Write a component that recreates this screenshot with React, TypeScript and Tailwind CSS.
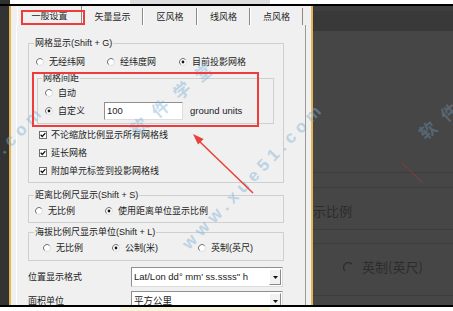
import React from 'react';

// Grid settings dialog (一般设置 tab) over a dimmed screenshot

type RadioProps = { checked?: boolean; label: string };

const Radio = ({ checked, label }: RadioProps) => (
  <div className="flex items-center gap-[5px] h-[12px] whitespace-nowrap">
    <svg width="8" height="8" viewBox="0 0 8 8" className="shrink-0">
      <circle cx="4" cy="4" r="3.5" fill="#ffffff" stroke="#dcdcdc" />
      <path d="M1.5 6.5 A3.5 3.5 0 0 1 6.5 1.5" fill="none" stroke="#7a7a7a" />
      {checked && <circle cx="4" cy="4" r="1.4" fill="#151515" />}
    </svg>
    <span>{label}</span>
  </div>
);

const Check = ({ label }: { label: string }) => (
  <div className="flex items-center gap-[4px] h-[12px] whitespace-nowrap">
    <svg width="8" height="8" viewBox="0 0 8 8" className="shrink-0">
      <rect x="0.5" y="0.5" width="7" height="7" fill="#ffffff" stroke="#6e6e6e" />
      <path d="M1.7 3.8 L3.3 5.5 L6.3 2.1" fill="none" stroke="#111111" strokeWidth="1.3" />
    </svg>
    <span>{label}</span>
  </div>
);

const Tab = ({ label, className }: { label: string; className: string }) => (
  <div className={`flex items-center justify-center border-r border-[#8a8a8a] ${className}`}>
    {label}
  </div>
);

const Select = ({ value }: { value: string }) => (
  <div className="w-[152px] h-[20px] flex bg-white border border-[#8f8f8f] border-b-[#dcdcdc] border-r-[#dcdcdc] shrink-0">
    <div className="flex-1 flex items-center pl-[2px] text-[9.5px] whitespace-nowrap overflow-hidden">{value}</div>
    <div className="w-[12px] my-[1px] mr-[1px] flex items-center justify-center bg-[#f2f2f2] border border-[#ffffff] border-b-[#8a8a8a] border-r-[#8a8a8a]">
      <svg width="5" height="3" viewBox="0 0 5 3">
        <path d="M0 0 H5 L2.5 3 Z" fill="#111111" />
      </svg>
    </div>
  </div>
);

const App = () => {
  return (
    <div className="w-[453px] h-[311px] relative overflow-hidden bg-white flex flex-col font-['Liberation_Sans','Noto_Sans_CJK_SC',sans-serif] text-[9px] leading-[12px] text-[#1c1c1c]">
      {/* top edge of the page behind */}
      <div className="h-[4px] flex shrink-0">
        <div className="w-[10px] bg-[#303030]" />
        <div className="w-[120px] bg-white" />
        <div className="w-[140px] bg-[#dedede]" />
        <div className="flex-1 bg-white" />
      </div>
      <div className="h-[2px] bg-black shrink-0" />

      <div className="flex h-[299px] shrink-0">
        <div className="w-[9px] bg-[#333333]" />
        <div className="w-[2px] bg-[#e3b651]" />

        {/* Dialog */}
        <div className="w-[300px] bg-[#f0f0f0] flex flex-col">
          <div className="h-[19px] flex pl-[6px] shrink-0">
            <Tab label="一般设置" className="w-[65px] border-l border-l-white" />
            <Tab label="矢量显示" className="w-[61px] mt-[2px] border-l border-l-white" />
            <Tab label="区风格" className="w-[54px] mt-[2px] border-l border-l-white" />
            <Tab label="线风格" className="w-[53px] mt-[2px] border-l border-l-white" />
            <Tab label="点风格" className="w-[53px] mt-[2px] border-l border-l-white" />
          </div>

          <div className="ml-[5px] w-[290px] flex-1 overflow-hidden border-l border-l-white border-r border-r-[#9a9a9a] pl-[11px] flex flex-col">
            {/* 网格显示 */}
            <fieldset className="w-[256px] mt-[12px] border border-[#cfcfcf] pb-[5px] shrink-0">
              <legend className="ml-[5px] px-[1px] leading-[12px]">网格显示(Shift + G)</legend>
              <div className="flex mt-[7px] pl-[7px]">
                <div className="w-[71px]"><Radio label="无经纬网" /></div>
                <div className="w-[72px]"><Radio label="经纬度网" /></div>
                <Radio checked label="目前投影网格" />
              </div>

              <fieldset className="ml-[8px] w-[237px] mt-[4px] border border-[#cfcfcf] pb-[3px]">
                <legend className="ml-[4px] px-[1px] leading-[12px]">网格间距</legend>
                <div className="pl-[7px] mt-[3px]"><Radio label="自动" /></div>
                <div className="flex items-center pl-[7px] mt-[3px] h-[18px]">
                  <div className="w-[59px]"><Radio checked label="自定义" /></div>
                  <div className="w-[79px] h-[18px] bg-white border border-[#8f8f8f] border-b-[#dedede] border-r-[#dedede] pl-[2px] flex items-center text-[9.5px]">100</div>
                  <span className="ml-[7px] text-[9.5px]">ground units</span>
                </div>
              </fieldset>

              <div className="pl-[10px] mt-[5px] flex flex-col gap-[6px]">
                <Check label="不论缩放比例显示所有网格线" />
                <Check label="延长网格" />
                <Check label="附加单元标签到投影网格线" />
              </div>
            </fieldset>

            {/* 距离比例尺 */}
            <fieldset className="w-[256px] mt-[6px] border border-[#cfcfcf] pb-[5px] shrink-0">
              <legend className="ml-[5px] px-[1px] leading-[12px]">距离比例尺显示(Shift + S)</legend>
              <div className="flex mt-[4px] pl-[6px]">
                <div className="w-[70px]"><Radio label="无比例" /></div>
                <Radio checked label="使用距离单位显示比例" />
              </div>
            </fieldset>

            {/* 海拔比例尺 */}
            <fieldset className="w-[256px] mt-[3px] border border-[#cfcfcf] pb-[6px] shrink-0">
              <legend className="ml-[5px] px-[1px] leading-[12px]">海拔比例尺显示单位(Shift + L)</legend>
              <div className="flex mt-[4px] pl-[14px]">
                <div className="w-[69px]"><Radio label="无比例" /></div>
                <div className="w-[86px]"><Radio checked label="公制(米)" /></div>
                <Radio label="英制(英尺)" />
              </div>
            </fieldset>

            <div className="flex items-center mt-[6px] shrink-0">
              <div className="w-[103px]">位置显示格式</div>
              <Select value={'Lat/Lon dd° mm\' ss.ssss" h'} />
            </div>
            <div className="flex items-center mt-[4px] shrink-0">
              <div className="w-[103px]">面积单位</div>
              <Select value="平方公里" />
            </div>
          </div>
        </div>

        <div className="w-[2px] bg-[#e3b651]" />

        {/* dimmed background window */}
        <div className="flex-1 flex flex-col bg-[#464646] text-[13px] leading-[16px] text-[#2c2c2c] font-['Noto_Sans_CJK_SC',sans-serif]">
          <div className="h-[5px] bg-[#3e3e3e] shrink-0" />
          <div className="h-[20px] bg-[#393939] shrink-0" />
          <div className="h-[141px] shrink-0" />
          <div className="h-px bg-[#3d3d3d] shrink-0" />
          <div className="h-[14px] shrink-0" />
          <div className="h-px bg-[#3d3d3d] shrink-0" />
          <div className="h-[41px] pt-[15px] shrink-0 whitespace-nowrap">示比例</div>
          <div className="h-px bg-[#3d3d3d] shrink-0" />
          <div className="h-[13px] shrink-0" />
          <div className="h-px bg-[#3d3d3d] shrink-0" />
          <div className="h-[51px] pt-[15px] pl-[30px] flex gap-[8px] shrink-0 whitespace-nowrap">
            <svg width="11" height="11" viewBox="0 0 11 11" className="mt-[3px]">
              <path d="M2 9 A4.5 4.5 0 0 1 9 2" fill="none" stroke="#2e2e2e" strokeWidth="1.2" />
            </svg>
            <span>英制(英尺)</span>
          </div>
          <div className="h-px bg-[#3d3d3d] shrink-0" />
        </div>
      </div>

      <div className="h-[2px] bg-black shrink-0" />
      <div className="h-[4px] flex shrink-0">
        <div className="w-[120px] bg-white" />
        <div className="w-[150px] bg-[#f7f3dc]" />
        <div className="flex-1 bg-white" />
      </div>

      {/* watermarks */}
      <span className="absolute left-[185px] top-[238px] origin-left rotate-[-46deg] text-[17px] leading-[17px] font-bold tracking-[5px] text-[#7fb2d6] opacity-45 whitespace-nowrap pointer-events-none">www.xue51.com</span>
      <span className="absolute left-[-95px] top-[241px] origin-left rotate-[-46deg] text-[17px] leading-[17px] font-bold tracking-[5px] text-[#7fb2d6] opacity-45 whitespace-nowrap pointer-events-none">www.xue51.com</span>
      <span className="absolute left-[133px] top-[124px] origin-left rotate-[-40deg] text-[17px] leading-[17px] font-bold tracking-[11px] text-[#7fb2d6] opacity-45 whitespace-nowrap pointer-events-none">软件学堂</span>
      <span className="absolute left-[422px] top-[128px] origin-left rotate-[-40deg] text-[17px] leading-[17px] font-bold tracking-[11px] text-[#7fb2d6] opacity-30 whitespace-nowrap pointer-events-none">软件学堂</span>

      {/* red annotations */}
      <svg className="absolute left-0 top-0 pointer-events-none" width="453" height="311" viewBox="0 0 453 311">
        <rect x="22" y="11" width="62" height="13" fill="none" stroke="#ee3b3b" strokeWidth="2" />
        <rect x="33" y="73" width="225" height="53" fill="none" stroke="#ee3b3b" strokeWidth="2" />
        <line x1="199" y1="141" x2="253" y2="193" stroke="#e8403a" strokeWidth="1.5" />
        <path d="M193 134 L203.6 138.9 L198 144.5 Z" fill="#e8403a" />
        <line x1="402" y1="163" x2="423" y2="183" stroke="#8a3d3d" strokeWidth="1" />
      </svg>
    </div>
  );
};

export default App;
